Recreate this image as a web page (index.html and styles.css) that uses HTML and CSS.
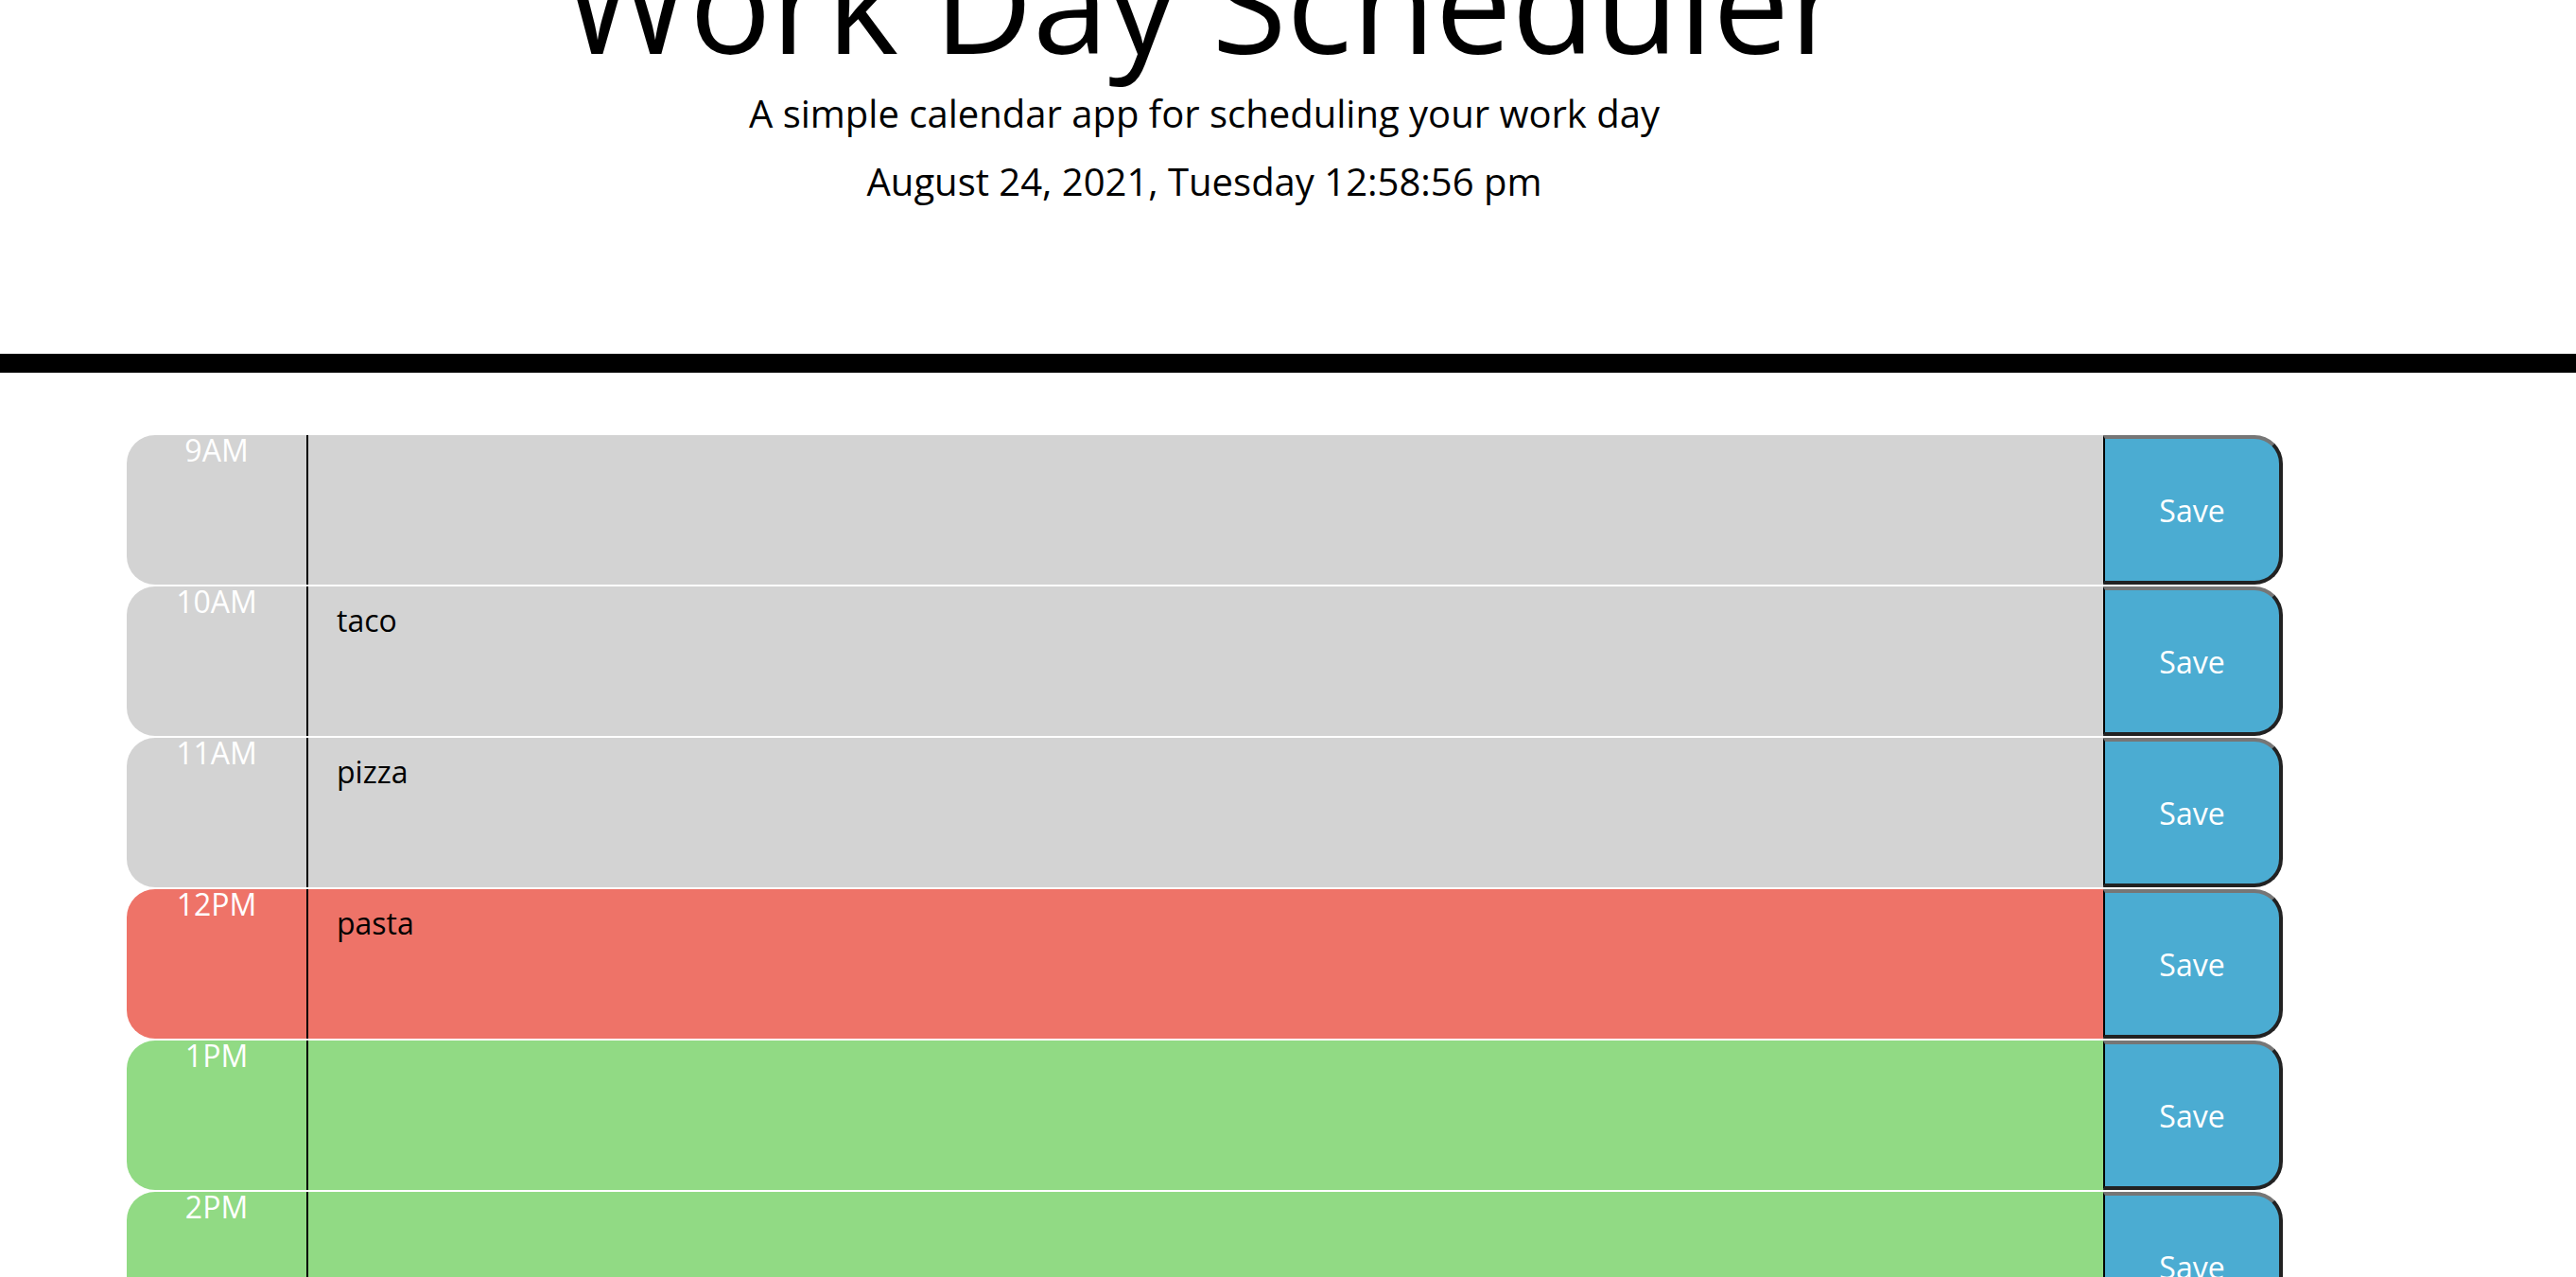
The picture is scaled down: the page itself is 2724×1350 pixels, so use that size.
FILE: index.html
```html
<!DOCTYPE html>
<html lang="en">
<head>
<meta charset="utf-8">
<title>Work Day Scheduler</title>
<link rel="stylesheet" href="styles.css">
</head>
<body>
<header class="jumbotron">
  <h1 class="title">Work Day Scheduler</h1>
  <p class="lead">A simple calendar app for scheduling your work day</p>
  <p class="current-day">August 24, 2021, Tuesday 12:58:56 pm</p>
</header>
<main class="container">
  <div class="row">
    <div class="hour past">9AM</div>
    <textarea class="description past"></textarea>
    <button class="saveBtn">Save</button>
  </div>
  <div class="row">
    <div class="hour past">10AM</div>
    <textarea class="description past">taco</textarea>
    <button class="saveBtn">Save</button>
  </div>
  <div class="row">
    <div class="hour past">11AM</div>
    <textarea class="description past">pizza</textarea>
    <button class="saveBtn">Save</button>
  </div>
  <div class="row">
    <div class="hour present">12PM</div>
    <textarea class="description present">pasta</textarea>
    <button class="saveBtn">Save</button>
  </div>
  <div class="row">
    <div class="hour future">1PM</div>
    <textarea class="description future"></textarea>
    <button class="saveBtn">Save</button>
  </div>
  <div class="row">
    <div class="hour future">2PM</div>
    <textarea class="description future"></textarea>
    <button class="saveBtn">Save</button>
  </div>
  <div class="row">
    <div class="hour future">3PM</div>
    <textarea class="description future"></textarea>
    <button class="saveBtn">Save</button>
  </div>
  <div class="row">
    <div class="hour future">4PM</div>
    <textarea class="description future"></textarea>
    <button class="saveBtn">Save</button>
  </div>
  <div class="row">
    <div class="hour future">5PM</div>
    <textarea class="description future"></textarea>
    <button class="saveBtn">Save</button>
  </div>
</main>
</body>
</html>
```

FILE: styles.css
```css
html, body {
  margin: 0;
  padding: 0;
  background: #ffffff;
}

body {
  font-family: "Open Sans", "Liberation Sans", sans-serif;
  line-height: 1;
  color: #000000;
  overflow: hidden;
}

.jumbotron {
  margin-top: -71px;
  padding: 0 177px 162px 0;
  text-align: center;
  border-bottom: 20px solid #000000;
}

.title {
  margin: 0;
  font-size: 144px;
  font-weight: 400;
  line-height: 144px;
}

.lead {
  margin: 27px 0 0;
  font-size: 40px;
  line-height: 40px;
}

.current-day {
  margin: 32px 0 0;
  font-size: 40px;
  line-height: 40px;
}

.container {
  margin: 64px 0 0 134px;
  width: 2280px;
}

.row {
  display: flex;
  height: 160px;
  box-sizing: border-box;
  border-top: 2px solid #ffffff;
}

.hour {
  width: 190px;
  flex: none;
  text-align: center;
  font-size: 32px;
  line-height: 1;
  color: #ffffff;
  border-radius: 30px 0 0 30px;
}

.description {
  flex: 1;
  margin: 0;
  padding: 20px 30px;
  border: none;
  border-left: 2px solid #000000;
  font-family: "Open Sans", "Liberation Sans", sans-serif;
  font-size: 32px;
  line-height: 1;
  color: #000000;
  resize: none;
  outline: none;
}

.past {
  background-color: #d3d3d3;
}

.present {
  background-color: #ee7368;
}

.future {
  background-color: #91da84;
}

.saveBtn {
  width: 190px;
  flex: none;
  margin: 0;
  padding: 0;
  box-sizing: border-box;
  background-color: #4bacd2;
  color: #ffffff;
  font-family: "Open Sans", "Liberation Sans", sans-serif;
  font-size: 32px;
  border-style: solid;
  border-width: 4px 4px 4px 2px;
  border-color: #767676 #222222 #222222 #000000;
  border-radius: 0 30px 30px 0;
}
```
